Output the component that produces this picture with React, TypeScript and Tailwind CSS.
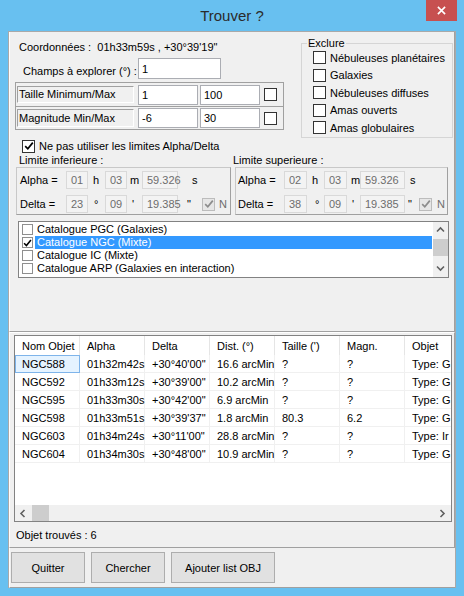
import React from "react"

type BoxProps = { checked?: boolean; disabled?: boolean; small?: boolean }

function CheckBox({ checked = false, disabled = false, small = false }: BoxProps) {
  const frame = small
    ? "h-[11px] w-[11px] border-[#8f8f8f] bg-white"
    : disabled
      ? "h-[13px] w-[13px] border-[#bcbcbc] bg-[#e6e6e6]"
      : "h-[13px] w-[13px] border-[#333333] bg-white"
  return (
    <span className={`flex shrink-0 items-center justify-center border ${frame}`}>
      {checked ? (
        <svg viewBox="0 0 10 10" className="h-[10px] w-[10px]">
          <path
            d="M1.2 5.2 L3.8 7.8 L8.8 1.6"
            fill="none"
            stroke={disabled ? "#8c8c8c" : "#000"}
            strokeWidth="1.7"
          />
        </svg>
      ) : null}
    </span>
  )
}

function Field({ value, className }: { value: string; className: string }) {
  return (
    <span className={`flex shrink-0 items-center border border-[#abadb3] bg-white pl-[3px] ${className}`}>
      {value}
    </span>
  )
}

function Dim({ value, className }: { value: string; className: string }) {
  return (
    <span
      className={`flex h-[18px] shrink-0 items-center border border-[#d9d9d9] bg-[#f3f3f3] pl-[4px] text-[#6d6d6d] ${className}`}
    >
      {value}
    </span>
  )
}

function Chevron({ dir }: { dir: "up" | "down" | "left" | "right" }) {
  const d = {
    up: "M1 5.5 L4.5 2 L8 5.5",
    down: "M1 2.5 L4.5 6 L8 2.5",
    left: "M5.5 1 L2 4.5 L5.5 8",
    right: "M2.5 1 L6 4.5 L2.5 8",
  }[dir]
  return (
    <svg viewBox="0 0 9 9" className="h-[9px] w-[9px]">
      <path d={d} fill="none" stroke="#606060" strokeWidth="1.6" />
    </svg>
  )
}

const catalogues = [
  { name: "Catalogue PGC (Galaxies)", checked: false },
  { name: "Catalogue NGC (Mixte)", checked: true },
  { name: "Catalogue IC (Mixte)", checked: false },
  { name: "Catalogue ARP (Galaxies en interaction)", checked: false },
]

const exclusions = [
  "Nébuleuses planétaires",
  "Galaxies",
  "Nébuleuses diffuses",
  "Amas ouverts",
  "Amas globulaires",
]

const columns = ["Nom Objet", "Alpha", "Delta", "Dist. (°)", "Taille (')", "Magn.", "Objet"]

// last column is cut by the list view in the original, only its start shows
const rows = [
  ["NGC588", "01h32m42s", "+30°40'00\"", "16.6 arcMin", "?", "?", "Type: G"],
  ["NGC592", "01h33m12s", "+30°39'00\"", "10.2 arcMin", "?", "?", "Type: G"],
  ["NGC595", "01h33m30s", "+30°42'00\"", "6.9 arcMin", "?", "?", "Type: G"],
  ["NGC598", "01h33m51s", "+30°39'37\"", "1.8 arcMin", "80.3", "6.2", "Type: G"],
  ["NGC603", "01h34m24s", "+30°11'00\"", "28.8 arcMin", "?", "?", "Type: Ir"],
  ["NGC604", "01h34m30s", "+30°48'00\"", "10.9 arcMin", "?", "?", "Type: G"],
]

export default function App() {
  return (
    <div className="flex h-[596px] w-[464px] flex-col bg-[#68c0f0] text-[11px] leading-[14px] text-black [font-family:'Liberation_Sans',Arial,sans-serif]">
      {/* title bar */}
      <div className="relative flex h-[31px] shrink-0 items-center justify-center">
        <span className="text-[15px] text-[#2b2b2b]">Trouver ?</span>
        <span className="absolute right-[7px] top-0 flex h-[21px] w-[31px] items-center justify-center bg-[#c75050]">
          <svg viewBox="0 0 10 10" className="h-[9px] w-[9px]">
            <path d="M1 1 L9 9 M9 1 L1 9" stroke="#fff" strokeWidth="1.8" />
          </svg>
        </span>
      </div>

      <div className="ml-[8px] flex h-[557px] w-[448px] flex-col border-x border-t border-[#a9a9a9] bg-[#f0f0f0]">
        {/* search criteria */}
        <div className="flex h-[300px] flex-col border-b border-l border-r border-b-[#a0a0a0] border-l-white border-r-[#a0a0a0]">
          <div className="flex">
            <div className="ml-[5px] w-[269px]">
              <div className="mt-[8px] h-[14px] whitespace-pre pl-[4px]">
                {"Coordonnées :  01h33m59s , +30°39'19\""}
              </div>
              <div className="mt-[4px] flex h-[21px]">
                <span className="w-[123px] pl-[8px] pt-[6px]">Champs à explorer (°) :</span>
                <Field value="1" className="h-[21px] w-[83px]" />
              </div>
              <div className="mt-[3px] border border-[#a0a0a0]">
                <div className="flex h-[23px] items-center">
                  <span className="ml-[1px] h-[17px] w-[117px] border border-b-white border-l-[#a0a0a0] border-r-white border-t-[#a0a0a0] pl-[1px] leading-[15px]">
                    Taille Minimum/Max
                  </span>
                  <Field value="1" className="ml-[4px] h-[20px] w-[60px]" />
                  <Field value="100" className="ml-[2px] h-[20px] w-[60px]" />
                  <span className="ml-[4px]">
                    <CheckBox />
                  </span>
                </div>
                <div className="flex h-[23px] items-center border-t border-[#a0a0a0]">
                  <span className="ml-[1px] h-[18px] w-[117px] border border-b-white border-l-[#a0a0a0] border-r-white border-t-[#a0a0a0] pl-[1px] leading-[16px]">
                    Magnitude Min/Max
                  </span>
                  <Field value="-6" className="ml-[4px] h-[20px] w-[60px]" />
                  <Field value="30" className="ml-[2px] h-[20px] w-[60px]" />
                  <span className="ml-[4px]">
                    <CheckBox />
                  </span>
                </div>
              </div>
            </div>

            <div className="relative ml-[17px] mt-[11px] h-[95px] w-[152px] border border-[#d5d5d5] pt-[5px]">
              <span className="absolute -top-[8px] left-[5px] bg-[#f0f0f0] px-[1px]">Exclure</span>
              {exclusions.map((label) => (
                <div key={label} className="flex h-[17.5px] items-center gap-[4px] pl-[11px]">
                  <CheckBox />
                  <span>{label}</span>
                </div>
              ))}
            </div>
          </div>

          <div className="mt-[1px] flex h-[14px] items-center gap-[4px] pl-[12px]">
            <CheckBox checked />
            <span>Ne pas utiliser les limites Alpha/Delta</span>
          </div>

          <div className="flex">
            <div className="ml-[6px] w-[215px]">
              <div className="h-[14px] pl-[3px]">Limite inferieure :</div>
              <div className="flex h-[48px] flex-col gap-[6px] border border-b-[#a0a0a0] border-l-[#c8c8c8] border-r-[#a0a0a0] border-t-[#c8c8c8] pt-[3px]">
                <div className="flex h-[18px] items-center pl-[3px]">
                  <span className="w-[46px]">Alpha =</span>
                  <Dim value="01" className="w-[22px]" />
                  <span className="w-[17px] pl-[5px]">h</span>
                  <Dim value="03" className="w-[22px]" />
                  <span className="w-[15px] pl-[3px]">m</span>
                  <Dim value="59.326" className="w-[36px]" />
                  <span className="pl-[14px]">s</span>
                </div>
                <div className="flex h-[18px] items-center pl-[3px]">
                  <span className="w-[46px]">Delta =</span>
                  <Dim value="23" className="w-[22px]" />
                  <span className="w-[17px] pl-[6px]">°</span>
                  <Dim value="09" className="w-[22px]" />
                  <span className="w-[15px] pl-[5px]">'</span>
                  <Dim value="19.385" className="w-[36px]" />
                  <span className="w-[24px] pl-[9px]">"</span>
                  <CheckBox checked disabled />
                  <span className="pl-[4px] text-[#6d6d6d]">N</span>
                </div>
              </div>
            </div>

            <div className="ml-[2px] w-[215px]">
              <div className="h-[14px]">Limite superieure :</div>
              <div className="ml-[2px] flex h-[48px] w-[213px] flex-col gap-[6px] border border-b-[#a0a0a0] border-l-[#c8c8c8] border-r-[#a0a0a0] border-t-[#c8c8c8] pt-[3px]">
                <div className="flex h-[18px] items-center pl-[2px]">
                  <span className="w-[46px]">Alpha =</span>
                  <Dim value="02" className="w-[23px]" />
                  <span className="w-[17px] pl-[5px]">h</span>
                  <Dim value="03" className="w-[23px]" />
                  <span className="w-[13px] pl-[4px]">m</span>
                  <Dim value="59.326" className="w-[45px]" />
                  <span className="pl-[5px]">s</span>
                </div>
                <div className="flex h-[18px] items-center pl-[2px]">
                  <span className="w-[46px]">Delta =</span>
                  <Dim value="38" className="w-[23px]" />
                  <span className="w-[17px] pl-[8px]">°</span>
                  <Dim value="09" className="w-[23px]" />
                  <span className="w-[13px] pl-[5px]">'</span>
                  <Dim value="19.385" className="w-[45px]" />
                  <span className="w-[14px] pl-[3px]">"</span>
                  <CheckBox checked disabled />
                  <span className="pl-[5px] text-[#6d6d6d]">N</span>
                </div>
              </div>
            </div>
          </div>

          {/* catalogues */}
          <div className="ml-[8px] mt-[6px] flex h-[57px] w-[431px] border border-[#828282] bg-white">
            <div className="flex-1 pt-[1px]">
              {catalogues.map((c, i) => (
                <div key={c.name} className="flex h-[13px] items-center pl-[3px] pr-[1px]">
                  <CheckBox small checked={c.checked} />
                  <span
                    className={
                      i === 1
                        ? "ml-[2px] flex-1 bg-[#3399ff] pl-[2px] leading-[13px] text-white"
                        : "ml-[2px] flex-1 pl-[2px] leading-[13px]"
                    }
                  >
                    {c.name}
                  </span>
                </div>
              ))}
            </div>
            <div className="flex w-[15px] flex-col bg-[#f0f0f0]">
              <div className="flex h-[17px] items-center justify-center">
                <Chevron dir="up" />
              </div>
              <div className="h-[17px] bg-[#cdcdcd]" />
              <div className="flex-1" />
              <div className="flex h-[17px] items-center justify-center">
                <Chevron dir="down" />
              </div>
            </div>
          </div>
        </div>

        {/* results */}
        <div className="flex h-[216px] flex-col border-b border-l border-r border-t border-b-[#a0a0a0] border-l-white border-r-[#a0a0a0] border-t-white">
          <div className="ml-[4px] mt-[2px] flex h-[187px] w-[438px] flex-col overflow-hidden border border-[#828282] bg-white">
            <div className="flex h-[19px] shrink-0">
              {columns.map((col) => (
                <div
                  key={col}
                  className="flex w-[65px] shrink-0 items-center border-r border-[#e5e5e5] pl-[7px]"
                >
                  {col}
                </div>
              ))}
            </div>
            {rows.map((row, r) => (
              <div key={row[0]} className="flex h-[18px] shrink-0">
                {row.map((cell, c) => (
                  <div
                    key={c}
                    className={
                      r === 0 && c === 0
                        ? "flex w-[65px] shrink-0 items-center whitespace-nowrap border border-[#7eb4ea] bg-[#e5f3ff] pl-[6px]"
                        : "flex w-[65px] shrink-0 items-center whitespace-nowrap border-b border-r border-[#f0f0f0] pl-[7px]"
                    }
                  >
                    {cell}
                  </div>
                ))}
              </div>
            ))}
            <div className="flex-1" />
            <div className="flex h-[16px] shrink-0 items-center bg-[#f0f0f0]">
              <div className="flex h-[16px] w-[17px] items-center justify-center">
                <Chevron dir="left" />
              </div>
              <div className="h-[16px] w-[17px] bg-[#cdcdcd]" />
              <div className="flex-1" />
              <div className="flex h-[16px] w-[17px] items-center justify-center">
                <Chevron dir="right" />
              </div>
            </div>
          </div>
          <div className="ml-[6px] mt-[6px] h-[14px]">Objet trouvés : 6</div>
        </div>

        {/* actions */}
        <div className="flex h-[40px] gap-[6px] border-b border-l border-b-[#a0a0a0] border-l-white pl-[1px] pt-[4px]">
          {[
            { label: "Quitter", w: "w-[74px]" },
            { label: "Chercher", w: "w-[74px]" },
            { label: "Ajouter list OBJ", w: "w-[104px]" },
          ].map((b) => (
            <button
              key={b.label}
              type="button"
              className={`flex h-[31px] items-center justify-center border border-[#adadad] bg-[#e1e1e1] ${b.w}`}
            >
              {b.label}
            </button>
          ))}
        </div>
      </div>
    </div>
  )
}
